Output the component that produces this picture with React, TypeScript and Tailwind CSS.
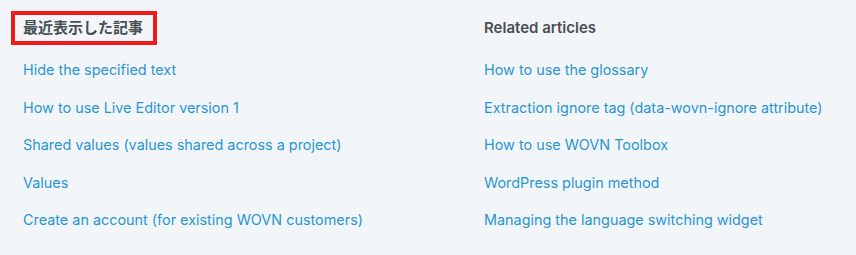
const RECENT = [
  'Hide the specified text',
  'How to use Live Editor version 1',
  'Shared values (values shared across a project)',
  'Values',
  'Create an account (for existing WOVN customers)',
];

const RELATED = [
  'How to use the glossary',
  'Extraction ignore tag (data-wovn-ignore attribute)',
  'How to use WOVN Toolbox',
  'WordPress plugin method',
  'Managing the language switching widget',
];

function LinkList({ items }: { items: string[] }) {
  return (
    <ul className="mt-[6px]">
      {items.map((item, i) => (
        <li key={i} className="leading-[37.5px] text-[14.4px] text-[#2a95d0] whitespace-nowrap">
          <a href="#">{item}</a>
        </li>
      ))}
    </ul>
  );
}

export default function App() {
  return (
    <div
      className="h-[255px] w-[856px] bg-[#f3f6f9] overflow-hidden"
      style={{ fontFamily: 'Inter, "Noto Sans CJK JP", sans-serif' }}
    >
      <div className="grid grid-cols-[461px_1fr] pl-[23px] pt-[11px]">
        <div>
          <h3 className="ml-[-12px] inline-flex h-[34px] items-center border-4 border-[#ee1c1c] pl-2 pr-[10px] text-[15px] font-semibold text-[#4a4f55]">
            最近表示した記事
          </h3>
          <LinkList items={RECENT} />
        </div>
        <div>
          <h3 className="flex h-[34px] items-center text-[15px] font-semibold text-[#4a4f55]">Related articles</h3>
          <LinkList items={RELATED} />
        </div>
      </div>
    </div>
  );
}
